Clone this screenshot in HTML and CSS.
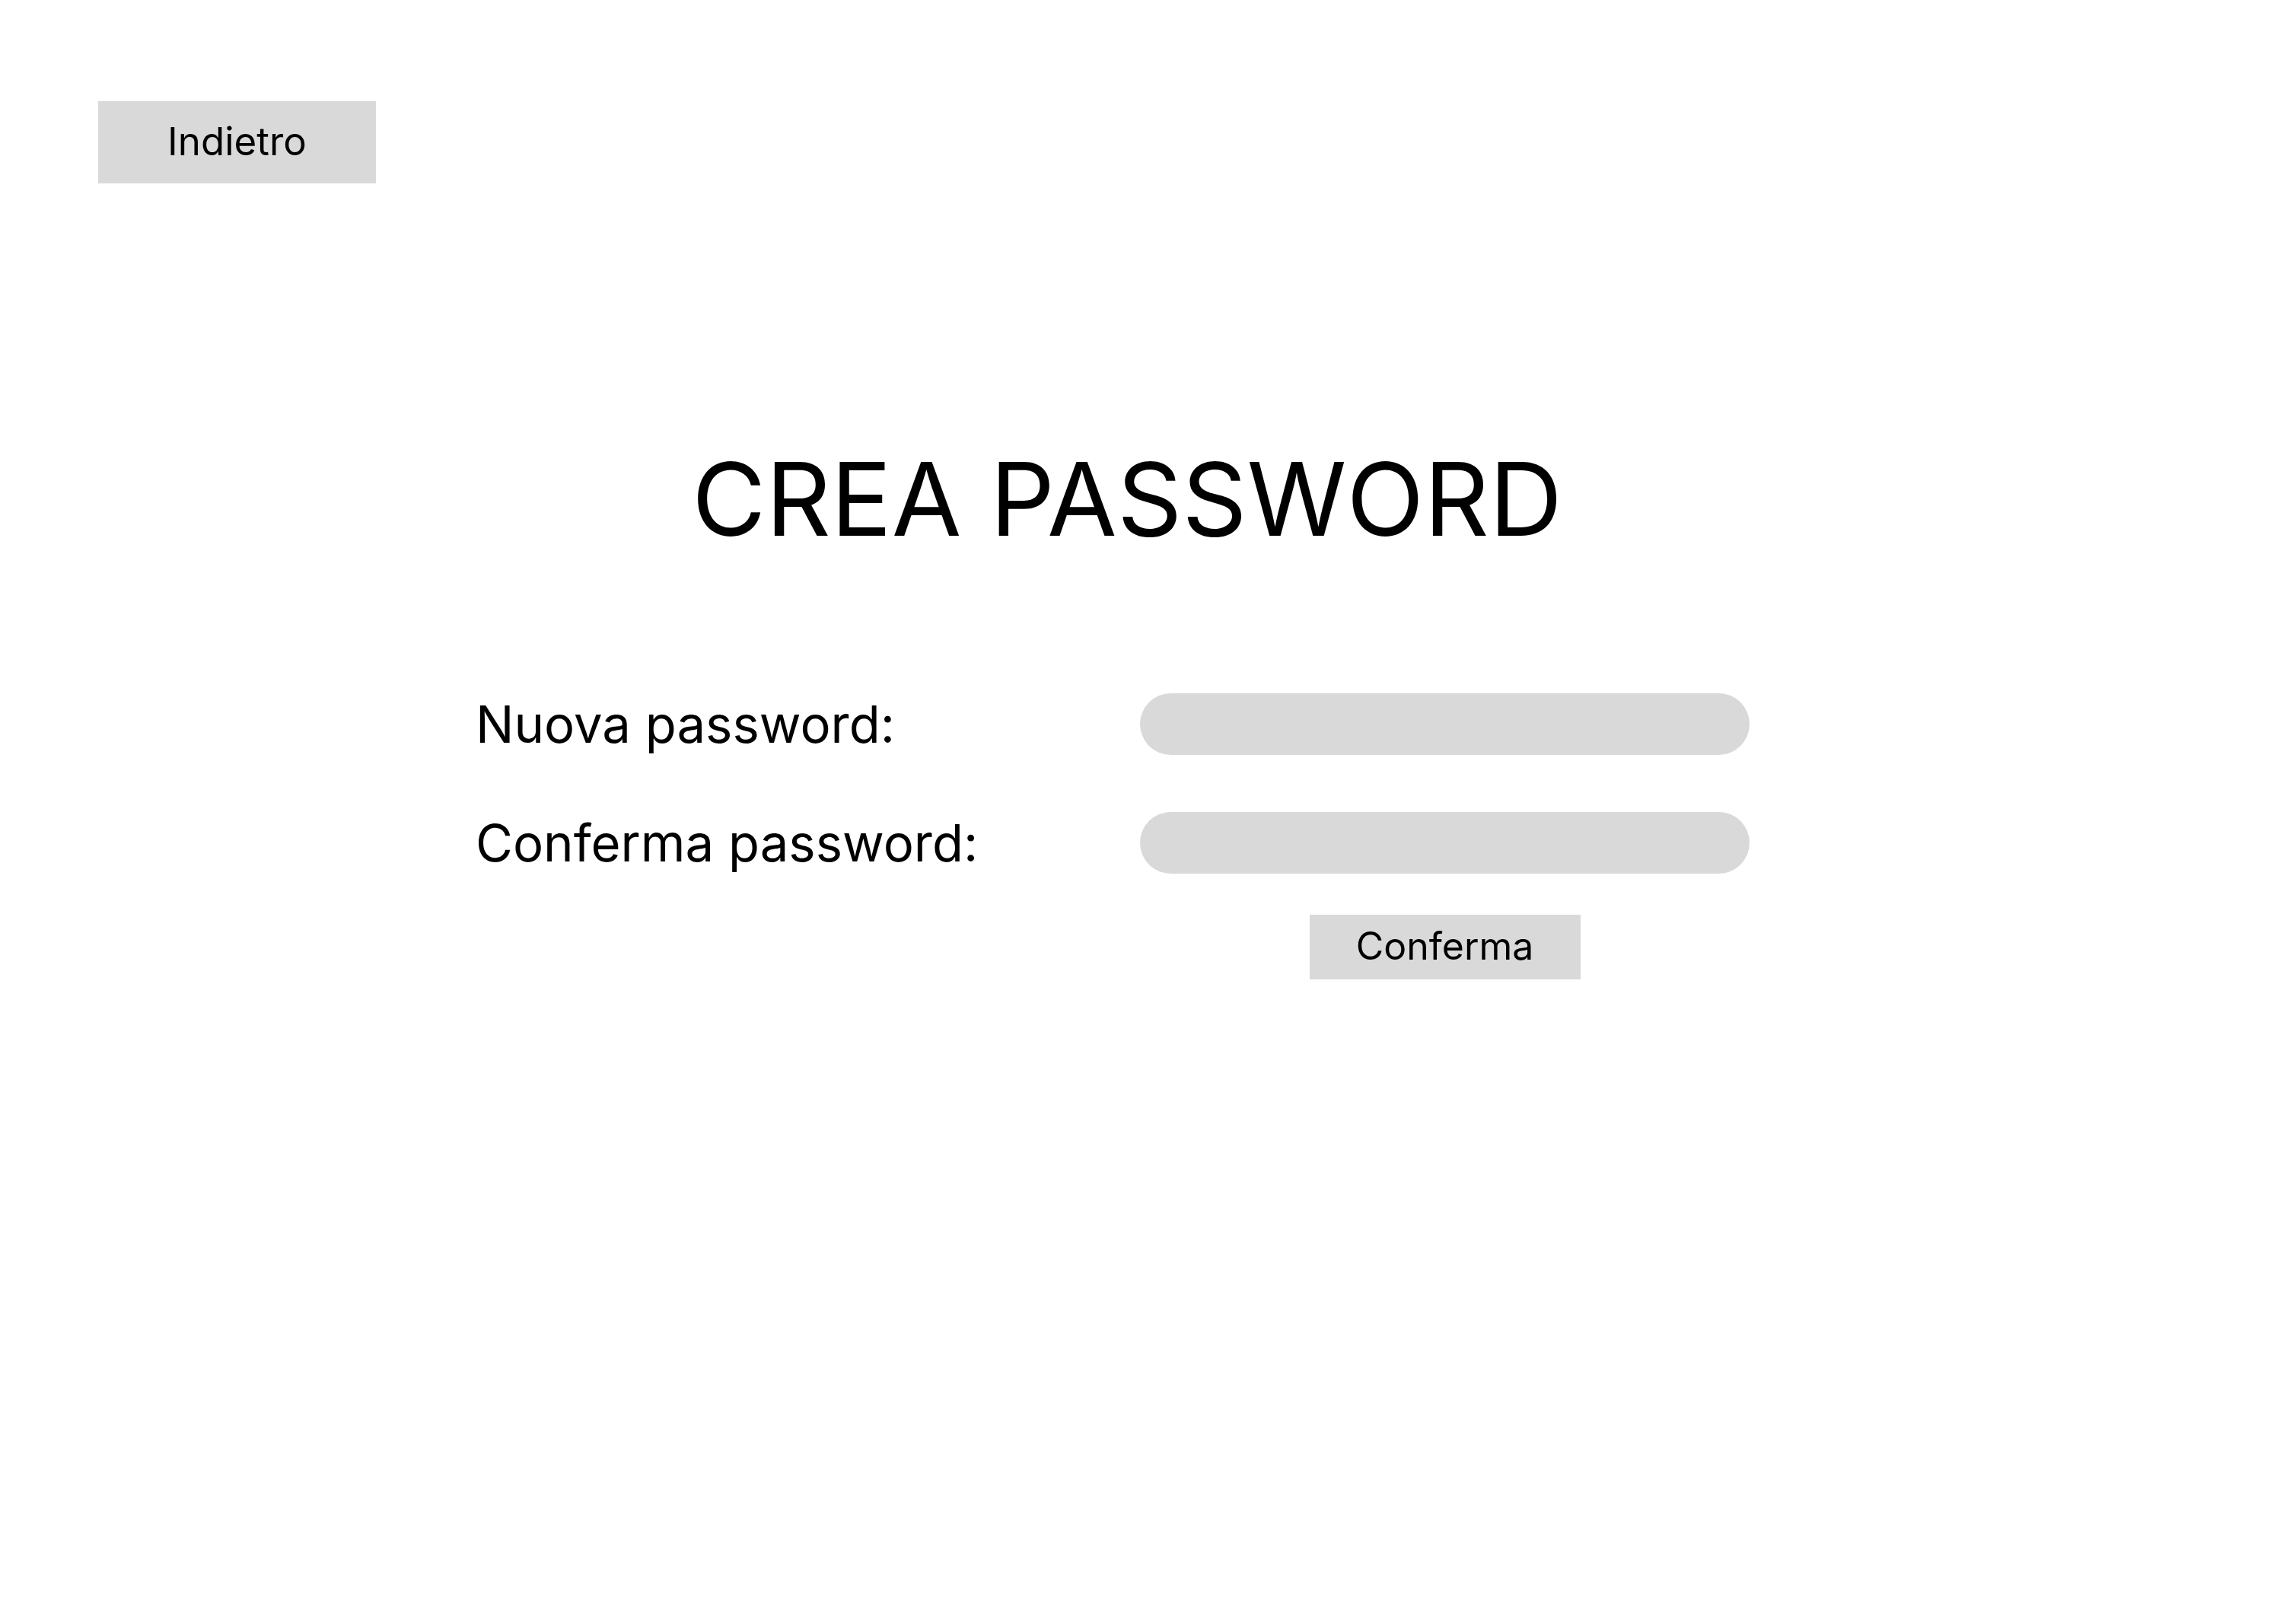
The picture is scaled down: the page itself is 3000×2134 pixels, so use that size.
FILE: index.html
```html
<!DOCTYPE html>
<html lang="it">
<head>
<meta charset="utf-8">
<title>Crea password</title>
<link rel="stylesheet" href="styles.css">
</head>
<body>
<div class="page">
  <button class="back" type="button">Indietro</button>
  <h1 class="title">CREA PASSWORD</h1>
  <form class="form">
    <label class="label" for="pw1">Nuova password:</label>
    <input class="field" id="pw1" type="password">
    <label class="label" for="pw2">Conferma password:</label>
    <input class="field" id="pw2" type="password">
    <div class="actions">
      <button class="confirm" type="button">Conferma</button>
    </div>
  </form>
</div>
</body>
</html>
```

FILE: styles.css
```css
html, body {
  margin: 0;
  padding: 0;
  background: #ffffff;
}

.page {
  width: 3000px;
  height: 2134px;
  font-family: Inter, "Noto Sans", sans-serif;
  color: #000000;
  display: flex;
  flex-direction: column;
  box-sizing: border-box;
  padding-top: 133px;
}

.back {
  align-self: flex-start;
  margin-left: 129px;
  width: 365px;
  height: 108px;
  background: #d9d9d9;
  border: none;
  padding: 0 0 3px 0;
  font-family: inherit;
  font-size: 51px;
  color: #000000;
  display: flex;
  align-items: center;
  justify-content: center;
}

.title {
  margin: 334px 0 0 0;
  font-size: 133px;
  line-height: 161px;
  font-weight: 400;
  text-align: center;
  padding-right: 38px;
}

.form {
  margin-top: 175px;
  margin-left: 625px;
  display: grid;
  grid-template-columns: 873px 801px;
  row-gap: 75px;
  align-items: center;
}

.label {
  font-size: 67px;
  line-height: 81px;
}

.field {
  height: 81px;
  width: 801px;
  box-sizing: border-box;
  border: none;
  border-radius: 40.5px;
  background: #d9d9d9;
  outline: none;
}

.actions {
  grid-column: 2;
  display: flex;
  justify-content: center;
  margin-top: -21px;
}

.confirm {
  width: 356px;
  height: 85px;
  background: #d9d9d9;
  border: none;
  padding: 0 0 3px 0;
  font-family: inherit;
  font-size: 50px;
  color: #000000;
  display: flex;
  align-items: center;
  justify-content: center;
}
```
